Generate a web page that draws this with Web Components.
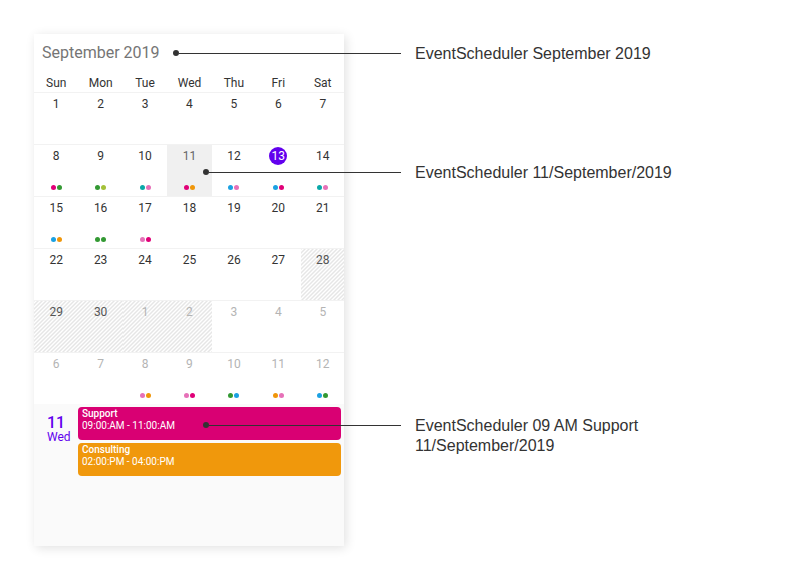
<!DOCTYPE html>
<html lang="en">
<head>
<meta charset="utf-8">
<meta name="viewport" content="width=device-width">
<title>EventScheduler</title>
<style>
  body { margin: 0; background: #fff; font-family: Roboto, "Liberation Sans", sans-serif; color: #333; }
</style>
</head>
<body>
<annotated-stage>
  <event-scheduler slot="subject" heading="September 2019">
    <agenda-day day="11" weekday="Wed">
      <agenda-event color="#d90073" name="Support">09:00:AM - 11:00:AM</agenda-event>
      <agenda-event color="#f0980c" name="Consulting">02:00:PM - 04:00:PM</agenda-event>
    </agenda-day>
  </event-scheduler>
  <call-out style="--start: 38%">EventScheduler September 2019</call-out>
  <call-out style="--start: 46%">EventScheduler 11/September/2019</call-out>
  <call-out style="--start: 46%">EventScheduler 09 AM Support<br>11/September/2019</call-out>
</annotated-stage>

<script>
const define = (name, css, html, setup) => customElements.define(name, class extends HTMLElement {
  connectedCallback() {
    if (this.shadowRoot) return;
    const root = this.attachShadow({ mode: "open" });
    root.innerHTML = `<style>*{box-sizing:border-box}${css}</style>${html}`;
    if (setup) setup(this, root);
  }
});

/* Subject on the left, notes laid over the same grid so that leader lines can reach into it. */
define("annotated-stage", `
  :host { display: grid; grid-template-columns: 310fr 422fr; padding: 34px 34px 24px; }
  ::slotted([slot=subject]) { grid-column: 1; grid-row: 1; }
  .notes { grid-column: 1 / -1; grid-row: 1; display: grid; grid-template-rows: 119px 253px auto;
    align-items: start; align-content: start; padding-top: 9px; pointer-events: none; }
`, `<slot name="subject"></slot><div class="notes"><slot></slot></div>`);

define("call-out", `
  :host { display: grid; grid-template-columns: 367fr 365fr; align-items: start;
    font: 16px/20px "Liberation Sans", Arial, sans-serif; color: #333; }
  .leader { display: flex; align-items: center; height: 20px; margin-left: var(--start); }
  .dot { width: 6px; height: 6px; border-radius: 50%; background: #333; flex: none; }
  .line { flex: 1; height: 1px; background: #333; }
  p { margin: 0; padding: 1px 0 0 14px; }
`, `<div class="leader"><span class="dot"></span><span class="line"></span></div><p><slot></slot></p>`);

define("day-cell", `
  :host { display: block; }
  button { display: flex; flex-direction: column; align-items: center; justify-content: space-between;
    width: 100%; height: 51px; padding: 2px 0 6px; border: 0; background: none; font: 12px/18px Roboto, sans-serif; color: #333; }
  .num { width: 18px; height: 18px; border-radius: 50%; text-align: center; }
  .dots { display: flex; gap: 1px; }
  i { width: 5px; height: 5px; border-radius: 50%; }
  :host([kind~=selected]) button { background: #f0f0f0; color: #666; }
  :host([kind~=today]) .num { background: #6200ee; color: #fff; }
  :host([kind~=blocked]) button { color: #555;
    background: linear-gradient(135deg, #e6e6e6, #fff 25%, #e6e6e6 50%, #fff 75%, #e6e6e6) 0 0 / 4px 4px; }
  :host([kind~=other]) button { color: #b4b4b4; }
`, `<button type="button"><span class="num"><slot></slot></span><span class="dots"></span></button>`,
(host, root) => {
  root.querySelector(".dots").innerHTML = (host.getAttribute("dots") || "").split(" ").filter(Boolean)
    .map(c => `<i style="background:${c}"></i>`).join("");
});

const M = "#e00078", G = "#339933", L = "#a4c139", T = "#0aa8a8", P = "#e671b8", B = "#1ba1e2", O = "#f09609";
const dots = { 7: [M, G], 8: [G, L], 9: [T, P], 10: [M, O], 11: [B, P], 12: [B, M], 13: [T, P],
  14: [B, O], 15: [G, G], 16: [P, M], 37: [P, O], 38: [P, M], 39: [G, B], 40: [O, P], 41: [B, G] };

define("event-scheduler", `
  :host { display: flex; flex-direction: column; min-height: 512px; background: #fafafa;
    box-shadow: 2px 2px 10px rgba(0,0,0,.12); overflow: hidden; }
  .month { background: #fff; }
  h1 { margin: 0; padding: 8px 8px 10px; font: 400 16px/22px Roboto, sans-serif; color: #757575; }
  table { width: calc(100% + 1px); border-collapse: collapse; table-layout: fixed; }
  th { padding: 0; height: 18px; font: 400 12px/18px Roboto, sans-serif; color: #333; }
  td { padding: 0; border-top: 1px solid #f2f2f2; }
`, `<section class="month"><h1></h1><table><thead><tr></tr></thead><tbody></tbody></table></section><slot></slot>`,
(host, root) => {
  root.querySelector("h1").textContent = host.getAttribute("heading");
  root.querySelector("thead tr").innerHTML = ["Sun", "Mon", "Tue", "Wed", "Thu", "Fri", "Sat"]
    .map(d => `<th scope="col">${d}</th>`).join("");
  let rows = "";
  for (let i = 0; i < 42; i++) {
    const kind = [i > 29 && "other", i === 10 && "selected", i === 12 && "today", i > 26 && i < 32 && "blocked"]
      .filter(Boolean).join(" ");
    rows += (i % 7 ? "" : "<tr>") +
      `<td><day-cell kind="${kind}" dots="${(dots[i] || []).join(" ")}">${i % 30 + 1}</day-cell></td>` +
      (i % 7 === 6 ? "</tr>" : "");
  }
  root.querySelector("tbody").innerHTML = rows;
});

define("agenda-day", `
  :host { display: grid; grid-template-columns: 38px 1fr; gap: 3px; padding: 3px; }
  .date { display: flex; flex-direction: column; padding: 9px 0 0 10px; color: #6200ee; font: 12px/14px Roboto, sans-serif; }
  b { font: 500 16px/14px Roboto, sans-serif; }
  .events { display: grid; gap: 3px; }
`, `<div class="date"><b></b><span></span></div><div class="events"><slot></slot></div>`,
(host, root) => {
  root.querySelector("b").textContent = host.getAttribute("day");
  root.querySelector("span").textContent = host.getAttribute("weekday");
});

define("agenda-event", `
  :host { display: block; }
  button { display: flex; flex-direction: column; width: 100%; height: 33px; padding: 1px 4px; border: 0;
    border-radius: 4px; color: #fff; text-align: left; font: 10px/12px Roboto, sans-serif; }
  strong { font-weight: 500; }
`, `<button type="button"><strong></strong><span><slot></slot></span></button>`,
(host, root) => {
  root.querySelector("button").style.background = host.getAttribute("color");
  root.querySelector("strong").textContent = host.getAttribute("name");
});
</script>
</body>
</html>
